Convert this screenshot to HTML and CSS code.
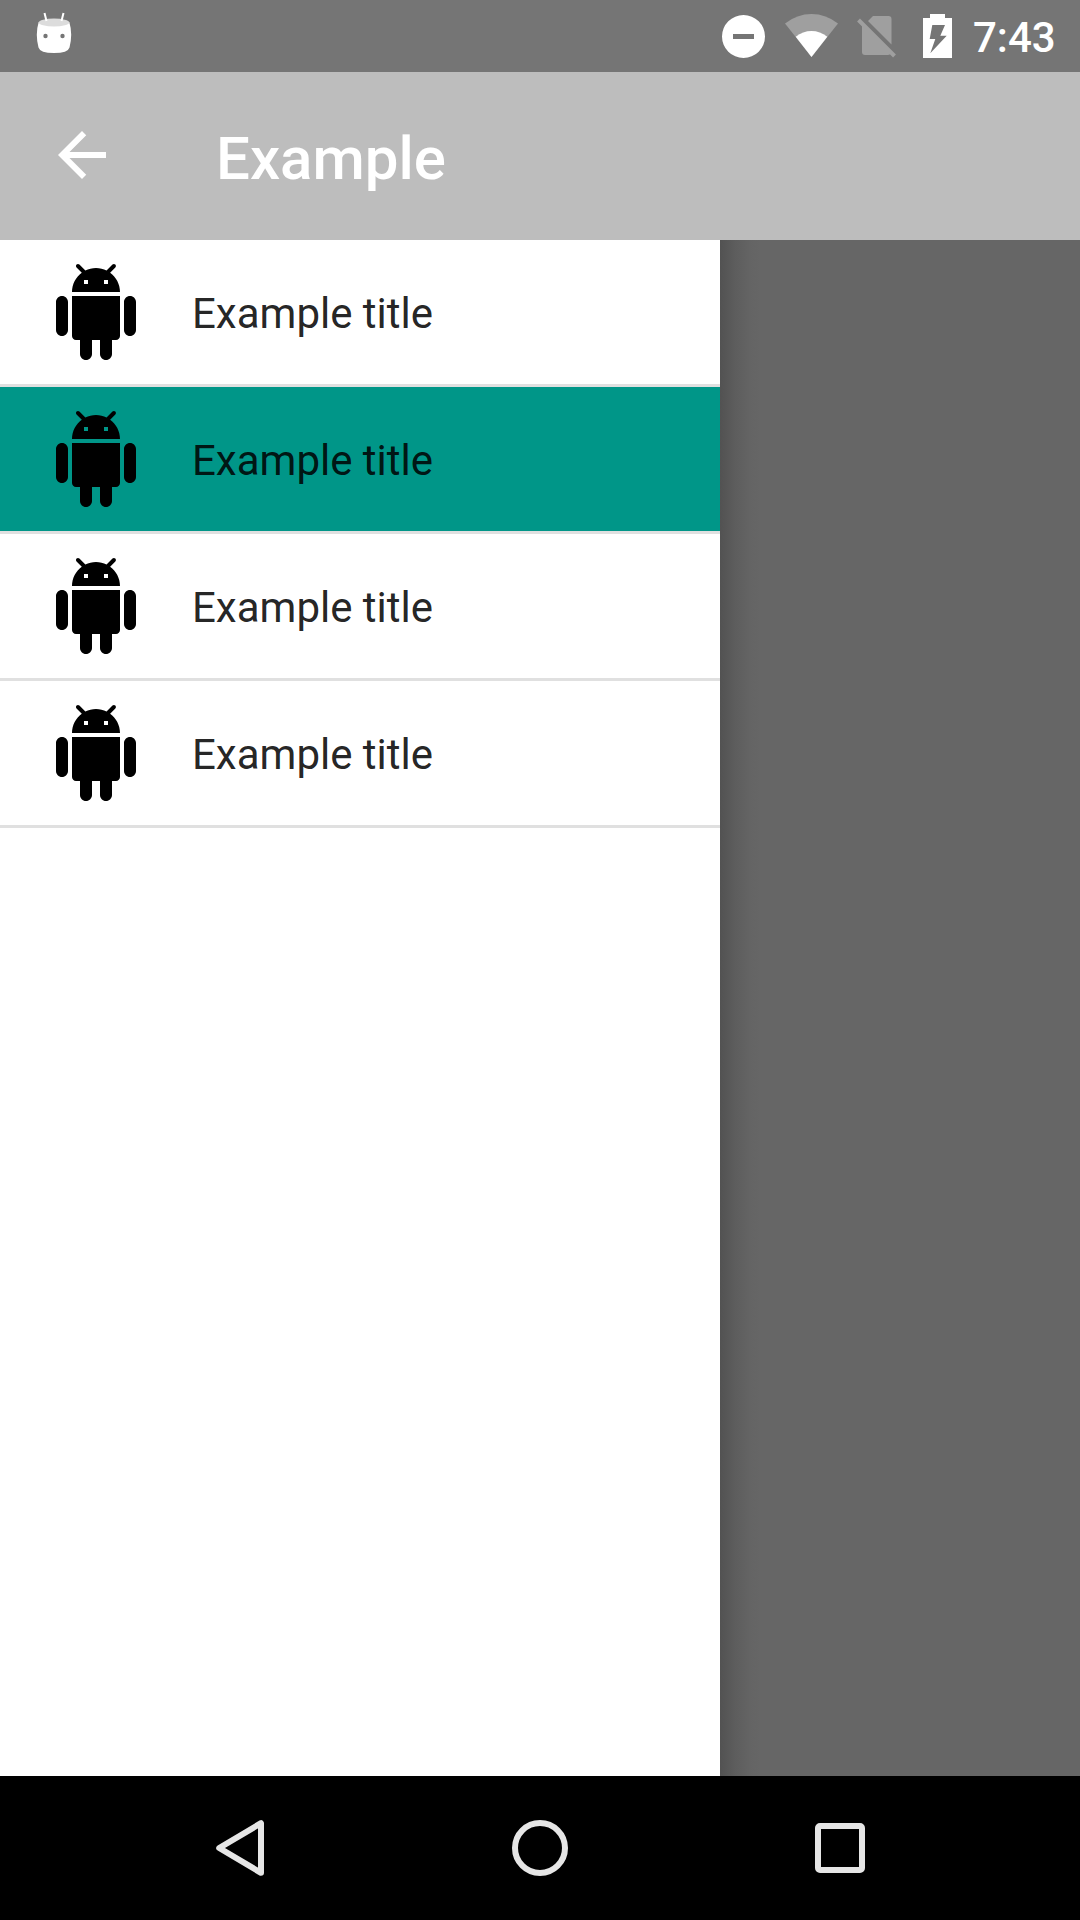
FILE: index.html
```html
<!DOCTYPE html>
<html lang="en">
<head>
<meta charset="utf-8">
<title>Example</title>
<link rel="stylesheet" href="styles.css">
</head>
<body>
<svg class="symbols" aria-hidden="true">
  <symbol id="android" viewBox="0 0 24 24">
    <path d="M6 18c0 .55.45 1 1 1h1v3.500c0 .83.67 1.500 1.500 1.500s1.500-.67 1.500-1.500V19h2v3.500c0 .83.67 1.500 1.500 1.500s1.500-.67 1.500-1.500V19h1c.55 0 1-.45 1-1V8H6v10zM3.500 8C2.670 8 2 8.670 2 9.500v7c0 .83.67 1.500 1.500 1.500S5 17.330 5 16.500v-7C5 8.670 4.330 8 3.500 8zm17 0c-.83 0-1.500.67-1.500 1.500v7c0 .83.67 1.500 1.500 1.500s1.500-.67 1.500-1.500v-7c0-.83-.67-1.500-1.500-1.500zm-4.970-5.840l1.300-1.300c.2-.2.200-.510 0-.710-.2-.2-.510-.2-.710 0l-1.480 1.480C13.850 1.230 12.950 1 12 1c-.96 0-1.860.23-2.660.63L7.850.15c-.2-.2-.510-.2-.710 0-.2.2-.2.510 0 .710l1.310 1.310C6.970 3.260 6 5.010 6 7h12c0-1.990-.97-3.750-2.470-4.840zM10 5H9V4h1v1zm5 0h-1V4h1v1z"/>
  </symbol>
</svg>
<div class="screen">
  <div class="statusbar">
    <svg class="notification" width="36" height="44" viewBox="0 0 36 44">
      <path d="M2.700 10Q18 17 33.300 10Q37 22 33.500 35.500Q32 41 18 41Q4 41 2.500 35.500Q-1 22 2.700 10Z" fill="#fff"/>
      <ellipse cx="18" cy="10.500" rx="15.300" ry="4" fill="#dcdcdc"/>
      <path d="M8.500 1L10.500 9M27.500 1L25.500 9" stroke="#fff" stroke-width="2"/>
      <circle cx="9.500" cy="24" r="2.200" fill="#757575"/><circle cx="26.500" cy="24" r="2.200" fill="#757575"/>
    </svg>
    <div class="indicators">
      <svg width="44" height="44" viewBox="0 0 44 44">
        <path fill="#fff" fill-rule="evenodd" d="M21.500 1a21.500 21.500 0 1 0 0 43a21.500 21.500 0 1 0 0-43zM11 20h21v5H11z"/>
      </svg>
      <svg class="wifi" width="54" height="44" viewBox="0 0 54 44">
        <path fill="#9f9f9f" d="M0 9.500Q12 0 26.500 0T53 9.500L26.500 43z"/>
        <path fill="#fff" d="M10.700 22.800Q18 17 26.500 17T42.300 22.800L26.500 43z"/>
      </svg>
      <svg class="sim" width="40" height="44" viewBox="0 0 40 44">
        <path fill="#9f9f9f" d="M16 2H31.500Q34.500 2 34.500 5V30.500L11 7zM5 10L34 38.500Q33 41 31 41H8Q5 41 5 38z"/>
        <path d="M1.500 6L37.500 42" stroke="#9f9f9f" stroke-width="4"/>
      </svg>
      <svg class="battery" width="30" height="44" viewBox="0 0 30 44">
        <path fill="#fff" fill-rule="evenodd" d="M7 0H22V4H29V44H0V4H7zM9.300 11H22L17.300 21.700H23.700L7.300 39.300L12.300 25H6.700z"/>
      </svg>
      <span class="clock">7:43</span>
    </div>
  </div>
  <header class="toolbar">
    <svg class="back" width="72" height="72" viewBox="0 0 24 24"><path fill="#fff" d="M20 11H7.830l5.590-5.590L12 4l-8 8 8 8 1.410-1.410L7.830 13H20v-2z"/></svg>
    <h1 class="title">Example</h1>
  </header>
  <main class="content">
    <ul class="drawer">
      <li class="item"><svg class="icon"><use href="#android"/></svg><span class="label">Example title</span></li>
      <li class="item selected"><svg class="icon"><use href="#android"/></svg><span class="label">Example title</span></li>
      <li class="item"><svg class="icon"><use href="#android"/></svg><span class="label">Example title</span></li>
      <li class="item"><svg class="icon"><use href="#android"/></svg><span class="label">Example title</span></li>
    </ul>
    <div class="scrim"></div>
  </main>
  <nav class="navbar">
    <svg width="60" height="60" viewBox="0 0 60 60"><path d="M51 5.200V54.800L9.200 30Z"/></svg>
    <svg width="60" height="60" viewBox="0 0 60 60"><circle cx="30" cy="30" r="25"/></svg>
    <svg width="60" height="60" viewBox="0 0 60 60"><rect x="8" y="8" width="44" height="44" rx="2"/></svg>
  </nav>
</div>
</body>
</html>
```
FILE: styles.css
```css
* { box-sizing: border-box; }
body { margin: 0; font-family: Roboto, sans-serif; }
svg { display: block; flex: none; }
.symbols { display: none; }
.screen { width: 1080px; height: 1920px; display: flex; flex-direction: column; overflow: hidden; }
.statusbar { height: 72px; background: #757575; display: flex; justify-content: space-between; padding: 0 24px 0 36px; }
.notification { margin-top: 12px; }
.indicators { display: flex; padding-top: 14px; }
.wifi { margin-left: 19px; }
.sim { margin-left: 18px; }
.battery { margin-left: 26px; }
.clock { margin-left: 20px; width: 83px; color: #fff; font-size: 42px; font-weight: 500; line-height: 48px; white-space: nowrap; }
.toolbar { height: 168px; background: #bdbdbd; display: flex; padding-left: 46px; }
.back { margin-top: 47px; }
.title { margin: 51px 0 0 98px; color: #fff; font-size: 60px; font-weight: 500; line-height: 72px; }
.content { flex: 1; display: flex; }
.drawer { width: 720px; margin: 0; padding: 0; list-style: none; background: #fff; }
.item { height: 147px; display: flex; align-items: center; gap: 48px; padding-left: 48px; border-bottom: 3px solid #e0e0e0; color: rgba(0, 0, 0, .87); font-size: 42px; line-height: 50px; }
.selected { background: #009688; background-clip: padding-box; }
.icon { width: 96px; height: 96px; fill: #000; }
.label { padding-top: 4px; }
.scrim { flex: 1; background: linear-gradient(90deg, #525252, #5d5d5d 15px, #646464 30px, #666 40px); }
.navbar { height: 144px; background: #000; display: flex; justify-content: space-between; padding: 42px 210px; }
.navbar svg { fill: none; stroke: #e6e6e6; stroke-width: 6; stroke-linejoin: round; }
```
